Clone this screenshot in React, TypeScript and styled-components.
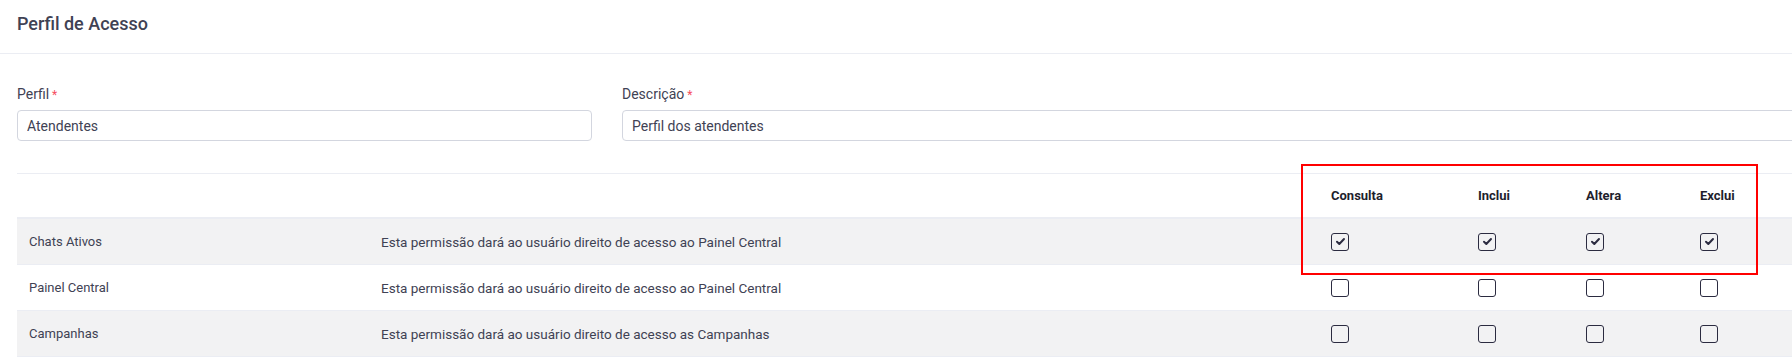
import React from 'react';
import styled, {createGlobalStyle} from 'styled-components';

type Permission = {
  name: string;
  description: string;
  checks: boolean[];
  striped?: boolean;
};

const permissions: Permission[] = [
  {
    name: 'Chats Ativos',
    description: 'Esta permissão dará ao usuário direito de acesso ao Painel Central',
    checks: [true, true, true, true],
    striped: true,
  },
  {
    name: 'Painel Central',
    description: 'Esta permissão dará ao usuário direito de acesso ao Painel Central',
    checks: [false, false, false, false],
  },
  {
    name: 'Campanhas',
    description: 'Esta permissão dará ao usuário direito de acesso as Campanhas',
    checks: [false, false, false, false],
    striped: true,
  },
];

const actions = ['Consulta', 'Inclui', 'Altera', 'Exclui'];

const CheckBox = ({checked}: {checked: boolean}) => (
  <Box>
    {checked && (
      <svg width="15" height="15" viewBox="0 0 15 15">
        <polyline
          points="4,7.8 6.3,10 11,5"
          fill="none"
          stroke="#2b2b40"
          strokeWidth="2"
          strokeLinecap="round"
          strokeLinejoin="round"
        />
      </svg>
    )}
  </Box>
);

export default function App() {
  return (
    <>
      <GlobalStyle />
      <Card>
        <CardHeader>
          <Title>Perfil de Acesso</Title>
        </CardHeader>
        <CardBody>
          <FormRow>
            <Field>
              <Label>
                Perfil<Required>*</Required>
              </Label>
              <Input defaultValue="Atendentes" />
            </Field>
            <Field>
              <Label>
                Descrição<Required>*</Required>
              </Label>
              <Input defaultValue="Perfil dos atendentes" />
            </Field>
          </FormRow>

          <TableWrap>
            <HeadRow>
              <Cell />
              <Cell />
              {actions.map(a => (
                <HeadCell key={a}>{a}</HeadCell>
              ))}
            </HeadRow>
            {permissions.map(p => (
              <Row key={p.name} striped={p.striped}>
                <Cell>{p.name}</Cell>
                <DescCell>{p.description}</DescCell>
                {p.checks.map((c, i) => (
                  <Cell key={i}>
                    <CheckBox checked={c} />
                  </Cell>
                ))}
              </Row>
            ))}
            <Highlight />
          </TableWrap>
        </CardBody>
      </Card>
    </>
  );
}

const GlobalStyle = createGlobalStyle`
  html, body {
    margin: 0;
    padding: 0;
    background: #ffffff;
    overflow: hidden;
  }
  body {
    font-family: Roboto, "Liberation Sans", Arial, sans-serif;
    color: #3f4254;
  }
`;

const Card = styled.div`
  width: 1792px;
  background: #ffffff;
`;

const CardHeader = styled.header`
  height: 54px;
  box-sizing: border-box;
  padding: 13px 17px 0;
  border-bottom: 1px solid #ebedf3;
`;

const Title = styled.h3`
  margin: 0;
  font-size: 18px;
  line-height: 22px;
  font-weight: 500;
  color: #3f4254;
`;

const CardBody = styled.div`
  padding: 30px 0 0 17px;
`;

const FormRow = styled.div`
  display: grid;
  grid-template-columns: 575px 1180px;
  column-gap: 30px;
`;

const Field = styled.div`
  display: flex;
  flex-direction: column;
`;

const Label = styled.label`
  display: block;
  height: 21px;
  font-size: 14px;
  line-height: 21px;
  color: #3f4254;
  margin-bottom: 5px;
  overflow: hidden;
`;

const Required = styled.span`
  color: #f64e60;
  font-size: 12px;
  line-height: 1;
  margin-left: 3px;
`;

const Input = styled.input`
  height: 31px;
  box-sizing: border-box;
  border: 1px solid #d3d6df;
  border-radius: 4px;
  padding: 0 9px;
  margin: 0;
  font-family: Roboto, "Liberation Sans", Arial, sans-serif;
  font-size: 14px;
  color: #3f4254;
  background: #ffffff;
  outline: none;
`;

const TableWrap = styled.div`
  position: relative;
  margin-top: 32px;
  width: 1785px;
`;

const columns = '352px 950px 147px 108px 114px 114px';

const HeadRow = styled.div`
  display: grid;
  grid-template-columns: ${columns};
  height: 46px;
  box-sizing: border-box;
  border-top: 1px solid #ebedf3;
  border-bottom: 2px solid #ebedf3;
`;

const Row = styled.div<{striped?: boolean}>`
  display: grid;
  grid-template-columns: ${columns};
  height: 46px;
  box-sizing: border-box;
  border-bottom: 1px solid #ebedf3;
  background: ${p => (p.striped ? '#f2f2f3' : '#ffffff')};
`;

const Cell = styled.div`
  display: flex;
  align-items: center;
  padding: 0 12px;
  font-size: 13px;
  line-height: 16px;
  color: #3f4254;
  white-space: nowrap;
`;

const DescCell = styled(Cell)`
  font-size: 13.5px;
`;

const HeadCell = styled(Cell)`
  font-weight: 700;
  color: #1e1e2d;
`;

const Box = styled.span`
  width: 18px;
  height: 18px;
  box-sizing: border-box;
  border: 1.5px solid #2b2b40;
  border-radius: 3px;
  display: flex;
  align-items: center;
  justify-content: center;
`;

const Highlight = styled.div`
  position: absolute;
  left: 1284px;
  top: -9px;
  width: 457px;
  height: 111px;
  box-sizing: border-box;
  border: 2px solid #ff0000;
  pointer-events: none;
`;
